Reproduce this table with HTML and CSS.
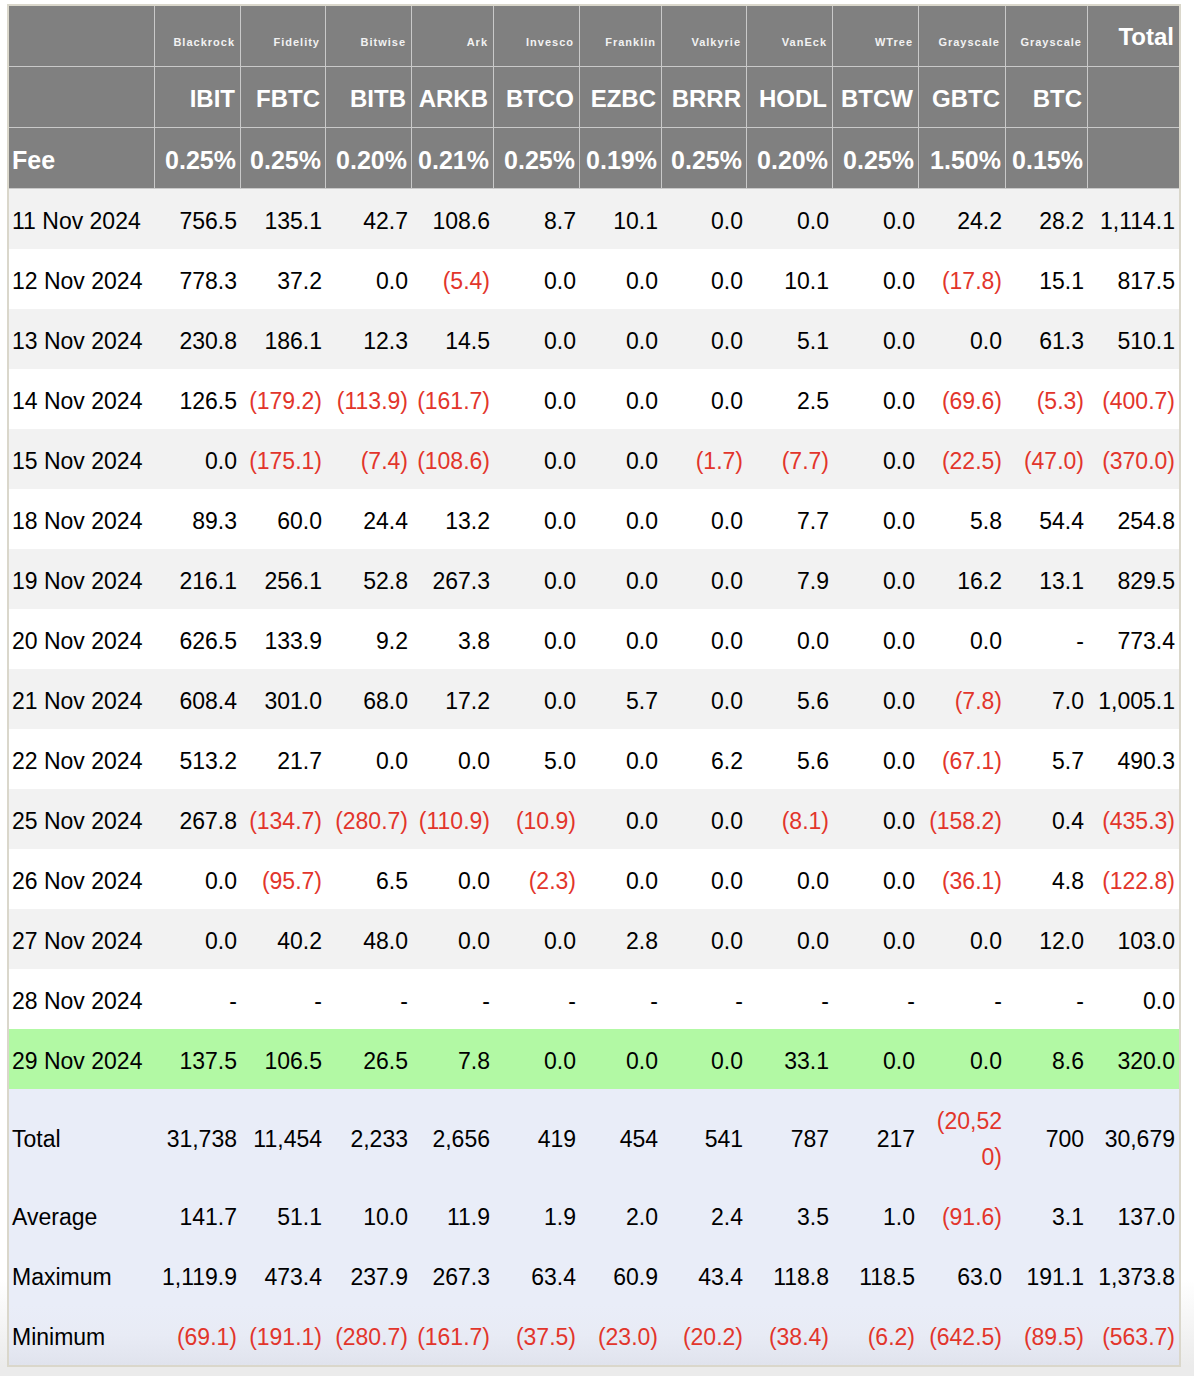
FILE: index.html
```html
<!DOCTYPE html>
<html lang="en">
<head>
<meta charset="utf-8">
<title>Bitcoin ETF Flows</title>
<link rel="stylesheet" href="styles.css">
</head>
<body>
<div class="page">
<div class="frame">
<table class="flows">
<colgroup>
<col class="c-date"><col class="c86"><col class="c85"><col class="c86"><col class="c82"><col class="c86"><col class="c82"><col class="c85"><col class="c86"><col class="c86"><col class="c87"><col class="c82"><col class="c-total">
</colgroup>
<thead>
<tr class="h-issuer">
<th></th><th>Blackrock</th><th>Fidelity</th><th>Bitwise</th><th>Ark</th><th>Invesco</th><th>Franklin</th><th>Valkyrie</th><th>VanEck</th><th>WTree</th><th>Grayscale</th><th>Grayscale</th><th class="h-total">Total</th>
</tr>
<tr class="h-ticker">
<th></th><th>IBIT</th><th>FBTC</th><th>BITB</th><th>ARKB</th><th>BTCO</th><th>EZBC</th><th>BRRR</th><th>HODL</th><th>BTCW</th><th>GBTC</th><th>BTC</th><th></th>
</tr>
<tr class="h-fee">
<th class="lbl">Fee</th><th>0.25%</th><th>0.25%</th><th>0.20%</th><th>0.21%</th><th>0.25%</th><th>0.19%</th><th>0.25%</th><th>0.20%</th><th>0.25%</th><th>1.50%</th><th>0.15%</th><th></th>
</tr>
</thead>
<tbody class="days">
<tr><td>11 Nov 2024</td><td>756.5</td><td>135.1</td><td>42.7</td><td>108.6</td><td>8.7</td><td>10.1</td><td>0.0</td><td>0.0</td><td>0.0</td><td>24.2</td><td>28.2</td><td>1,114.1</td></tr>
<tr><td>12 Nov 2024</td><td>778.3</td><td>37.2</td><td>0.0</td><td class="neg">(5.4)</td><td>0.0</td><td>0.0</td><td>0.0</td><td>10.1</td><td>0.0</td><td class="neg">(17.8)</td><td>15.1</td><td>817.5</td></tr>
<tr><td>13 Nov 2024</td><td>230.8</td><td>186.1</td><td>12.3</td><td>14.5</td><td>0.0</td><td>0.0</td><td>0.0</td><td>5.1</td><td>0.0</td><td>0.0</td><td>61.3</td><td>510.1</td></tr>
<tr><td>14 Nov 2024</td><td>126.5</td><td class="neg">(179.2)</td><td class="neg">(113.9)</td><td class="neg">(161.7)</td><td>0.0</td><td>0.0</td><td>0.0</td><td>2.5</td><td>0.0</td><td class="neg">(69.6)</td><td class="neg">(5.3)</td><td class="neg">(400.7)</td></tr>
<tr><td>15 Nov 2024</td><td>0.0</td><td class="neg">(175.1)</td><td class="neg">(7.4)</td><td class="neg">(108.6)</td><td>0.0</td><td>0.0</td><td class="neg">(1.7)</td><td class="neg">(7.7)</td><td>0.0</td><td class="neg">(22.5)</td><td class="neg">(47.0)</td><td class="neg">(370.0)</td></tr>
<tr><td>18 Nov 2024</td><td>89.3</td><td>60.0</td><td>24.4</td><td>13.2</td><td>0.0</td><td>0.0</td><td>0.0</td><td>7.7</td><td>0.0</td><td>5.8</td><td>54.4</td><td>254.8</td></tr>
<tr><td>19 Nov 2024</td><td>216.1</td><td>256.1</td><td>52.8</td><td>267.3</td><td>0.0</td><td>0.0</td><td>0.0</td><td>7.9</td><td>0.0</td><td>16.2</td><td>13.1</td><td>829.5</td></tr>
<tr><td>20 Nov 2024</td><td>626.5</td><td>133.9</td><td>9.2</td><td>3.8</td><td>0.0</td><td>0.0</td><td>0.0</td><td>0.0</td><td>0.0</td><td>0.0</td><td>-</td><td>773.4</td></tr>
<tr><td>21 Nov 2024</td><td>608.4</td><td>301.0</td><td>68.0</td><td>17.2</td><td>0.0</td><td>5.7</td><td>0.0</td><td>5.6</td><td>0.0</td><td class="neg">(7.8)</td><td>7.0</td><td>1,005.1</td></tr>
<tr><td>22 Nov 2024</td><td>513.2</td><td>21.7</td><td>0.0</td><td>0.0</td><td>5.0</td><td>0.0</td><td>6.2</td><td>5.6</td><td>0.0</td><td class="neg">(67.1)</td><td>5.7</td><td>490.3</td></tr>
<tr><td>25 Nov 2024</td><td>267.8</td><td class="neg">(134.7)</td><td class="neg">(280.7)</td><td class="neg">(110.9)</td><td class="neg">(10.9)</td><td>0.0</td><td>0.0</td><td class="neg">(8.1)</td><td>0.0</td><td class="neg">(158.2)</td><td>0.4</td><td class="neg">(435.3)</td></tr>
<tr><td>26 Nov 2024</td><td>0.0</td><td class="neg">(95.7)</td><td>6.5</td><td>0.0</td><td class="neg">(2.3)</td><td>0.0</td><td>0.0</td><td>0.0</td><td>0.0</td><td class="neg">(36.1)</td><td>4.8</td><td class="neg">(122.8)</td></tr>
<tr><td>27 Nov 2024</td><td>0.0</td><td>40.2</td><td>48.0</td><td>0.0</td><td>0.0</td><td>2.8</td><td>0.0</td><td>0.0</td><td>0.0</td><td>0.0</td><td>12.0</td><td>103.0</td></tr>
<tr><td>28 Nov 2024</td><td>-</td><td>-</td><td>-</td><td>-</td><td>-</td><td>-</td><td>-</td><td>-</td><td>-</td><td>-</td><td>-</td><td>0.0</td></tr>
<tr class="today"><td>29 Nov 2024</td><td>137.5</td><td>106.5</td><td>26.5</td><td>7.8</td><td>0.0</td><td>0.0</td><td>0.0</td><td>33.1</td><td>0.0</td><td>0.0</td><td>8.6</td><td>320.0</td></tr>
</tbody>
<tbody class="stats">
<tr class="s-total"><td>Total</td><td>31,738</td><td>11,454</td><td>2,233</td><td>2,656</td><td>419</td><td>454</td><td>541</td><td>787</td><td>217</td><td class="neg">(20,52<wbr>0)</td><td>700</td><td>30,679</td></tr>
<tr><td>Average</td><td>141.7</td><td>51.1</td><td>10.0</td><td>11.9</td><td>1.9</td><td>2.0</td><td>2.4</td><td>3.5</td><td>1.0</td><td class="neg">(91.6)</td><td>3.1</td><td>137.0</td></tr>
<tr><td>Maximum</td><td>1,119.9</td><td>473.4</td><td>237.9</td><td>267.3</td><td>63.4</td><td>60.9</td><td>43.4</td><td>118.8</td><td>118.5</td><td>63.0</td><td>191.1</td><td>1,373.8</td></tr>
<tr class="s-min"><td>Minimum</td><td class="neg">(69.1)</td><td class="neg">(191.1)</td><td class="neg">(280.7)</td><td class="neg">(161.7)</td><td class="neg">(37.5)</td><td class="neg">(23.0)</td><td class="neg">(20.2)</td><td class="neg">(38.4)</td><td class="neg">(6.2)</td><td class="neg">(642.5)</td><td class="neg">(89.5)</td><td class="neg">(563.7)</td></tr>
</tbody>
</table>
</div>
</div>
</body>
</html>
```
FILE: styles.css
```css
html, body {
  margin: 0;
  padding: 0;
}

body {
  background: linear-gradient(to bottom, #ffffff 0, #ffffff 1280px, #ebebeb 1366px, #ebebeb 100%);
  min-height: 1376px;
  font-family: "Liberation Sans", Arial, Helvetica, sans-serif;
  color: #000;
}

.page {
  padding: 4px 0 10px 7px;
}

.frame {
  display: inline-block;
  border: 2px solid #dad7cb;
}

.flows {
  border-collapse: separate;
  border-spacing: 0;
  table-layout: fixed;
  width: 1170px;
}

.c-date { width: 146px; }
.c82 { width: 82px; }
.c85 { width: 85px; }
.c86 { width: 86px; }
.c87 { width: 87px; }
.c-total { width: 91px; }

.flows th,
.flows td {
  box-sizing: border-box;
  line-height: 36px;
  text-align: right;
  white-space: nowrap;
}

/* Header block */
.flows th {
  background: #808080;
  color: #fff;
  font-weight: bold;
  border-right: 1px solid #c9c9c9;
  border-bottom: 1px solid #c9c9c9;
  padding: 14px 5px 10px 3px;
  vertical-align: bottom;
}

.flows th:last-child {
  border-right: none;
}

.h-issuer th {
  font-size: 11px;
  line-height: 20px;
  letter-spacing: 1px;
  color: #f2f2f2;
  padding-top: 26px;
  padding-bottom: 14px;
}

.h-issuer .h-total {
  font-size: 24px;
  line-height: 36px;
  letter-spacing: 0;
  color: #fff;
  padding-top: 13px;
  padding-bottom: 11px;
}

.h-ticker th {
  font-size: 24px;
}

.h-fee th {
  font-size: 25px;
  padding-right: 4px;
}

.h-fee th.lbl {
  text-align: left;
  padding-left: 3px;
}

/* Body rows */
.flows td {
  font-size: 23px;
  padding: 14px 4px 10px 3px;
  vertical-align: middle;
}

.flows td:first-child {
  text-align: left;
}

.days tr:nth-child(odd) td {
  background: #f2f2f2;
}

.days tr:nth-child(even) td {
  background: #ffffff;
}

.days tr.today td {
  background: #b2f9a4;
}

.stats td {
  background: #e9edf8;
}

.stats .s-total td {
  white-space: normal;
}

.stats .s-min td {
  background: linear-gradient(to bottom, #e9edf8 0%, #e8ebf5 50%, #e0e3ed 100%);
}

.neg {
  color: #e2352b;
}
```
